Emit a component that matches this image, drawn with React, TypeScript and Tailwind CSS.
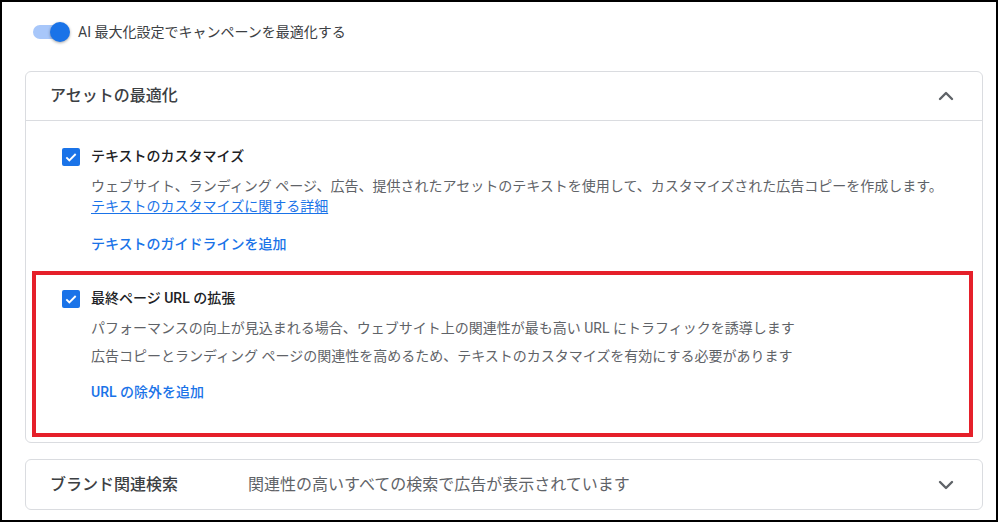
import { ChevronDown, ChevronUp } from "lucide-react";

const font = { fontFamily: 'Roboto, "Noto Sans CJK JP", sans-serif' };

function Checkbox() {
  return (
    <div className="mt-[2px] flex h-[18px] w-[18px] shrink-0 items-center justify-center rounded-[2px] bg-[#1a73e8]">
      <svg viewBox="0 0 24 24" className="h-[16px] w-[16px]" fill="none">
        <path d="M5 12.5l4.5 4.5L19 7.5" stroke="white" strokeWidth="2.8" />
      </svg>
    </div>
  );
}

export default function App() {
  return (
    <div
      className="box-border h-[522px] w-[998px] overflow-hidden border-2 border-black bg-white pl-[23px] pr-[13px]"
      style={font}
    >
      {/* Toggle */}
      <div className="flex h-[62px] items-center gap-[9px] pb-[2px] pl-[8px]">
        <div className="relative h-[14px] w-[36px] rounded-full bg-[#a8c7fa]">
          <div className="absolute -top-[3px] right-[-1px] h-[20px] w-[20px] rounded-full bg-[#1a73e8] shadow-[0_1px_3px_rgba(0,0,0,0.35)]" />
        </div>
        <span className="text-[14px] text-[#3c4043]">AI 最大化設定でキャンペーンを最適化する</span>
      </div>

      {/* Asset optimisation */}
      <div className="mt-[7px] rounded-[6px] border border-[#dadce0]">
        <div className="flex h-[49px] items-center justify-between border-b border-[#dadce0] pl-[24px] pr-[24px]">
          <span className="text-[16px] font-medium text-[#3c4043]">アセットの最適化</span>
          <ChevronUp size={24} strokeWidth={2.4} className="text-[#5f6368]" />
        </div>

        <div className="flex gap-[11px] pl-[36px] pt-[25px]">
          <Checkbox />
          <div className="text-[14px] leading-[20px]">
            <div className="font-medium text-[#202124]">テキストのカスタマイズ</div>
            <div className="mt-[10px] text-[#5f6368]">
              ウェブサイト、ランディング ページ、広告、提供されたアセットのテキストを使用して、カスタマイズされた広告コピーを作成します。
            </div>
            <a className="text-[#1a73e8] underline underline-offset-2">テキストのカスタマイズに関する詳細</a>
            <div className="mt-[18px] font-medium text-[#1a73e8]">テキストのガイドラインを追加</div>
          </div>
        </div>

        <div className="mb-[5px] ml-[6px] mr-[9px] mt-[17px] flex gap-[11px] border-4 border-[#e5202a] pb-[31px] pl-[26px] pt-[13px]">
          <Checkbox />
          <div className="text-[14px] leading-[20px]">
            <div className="font-medium text-[#202124]">最終ページ URL の拡張</div>
            <div className="mt-[10px] text-[#5f6368]">
              パフォーマンスの向上が見込まれる場合、ウェブサイト上の関連性が最も高い URL にトラフィックを誘導します
            </div>
            <div className="mt-[8px] text-[#5f6368]">
              広告コピーとランディング ページの関連性を高めるため、テキストのカスタマイズを有効にする必要があります
            </div>
            <div className="mt-[16px] font-medium text-[#1a73e8]">URL の除外を追加</div>
          </div>
        </div>
      </div>

      {/* Brand search */}
      <div className="mt-[16px] flex h-[51px] items-center rounded-[6px] border border-[#dadce0] pl-[24px] pr-[24px]">
        <span className="w-[198px] text-[16px] font-medium text-[#3c4043]">ブランド関連検索</span>
        <span className="flex-1 text-[16px] text-[#5f6368]">関連性の高いすべての検索で広告が表示されています</span>
        <ChevronDown size={24} strokeWidth={2.4} className="text-[#5f6368]" />
      </div>
    </div>
  );
}
